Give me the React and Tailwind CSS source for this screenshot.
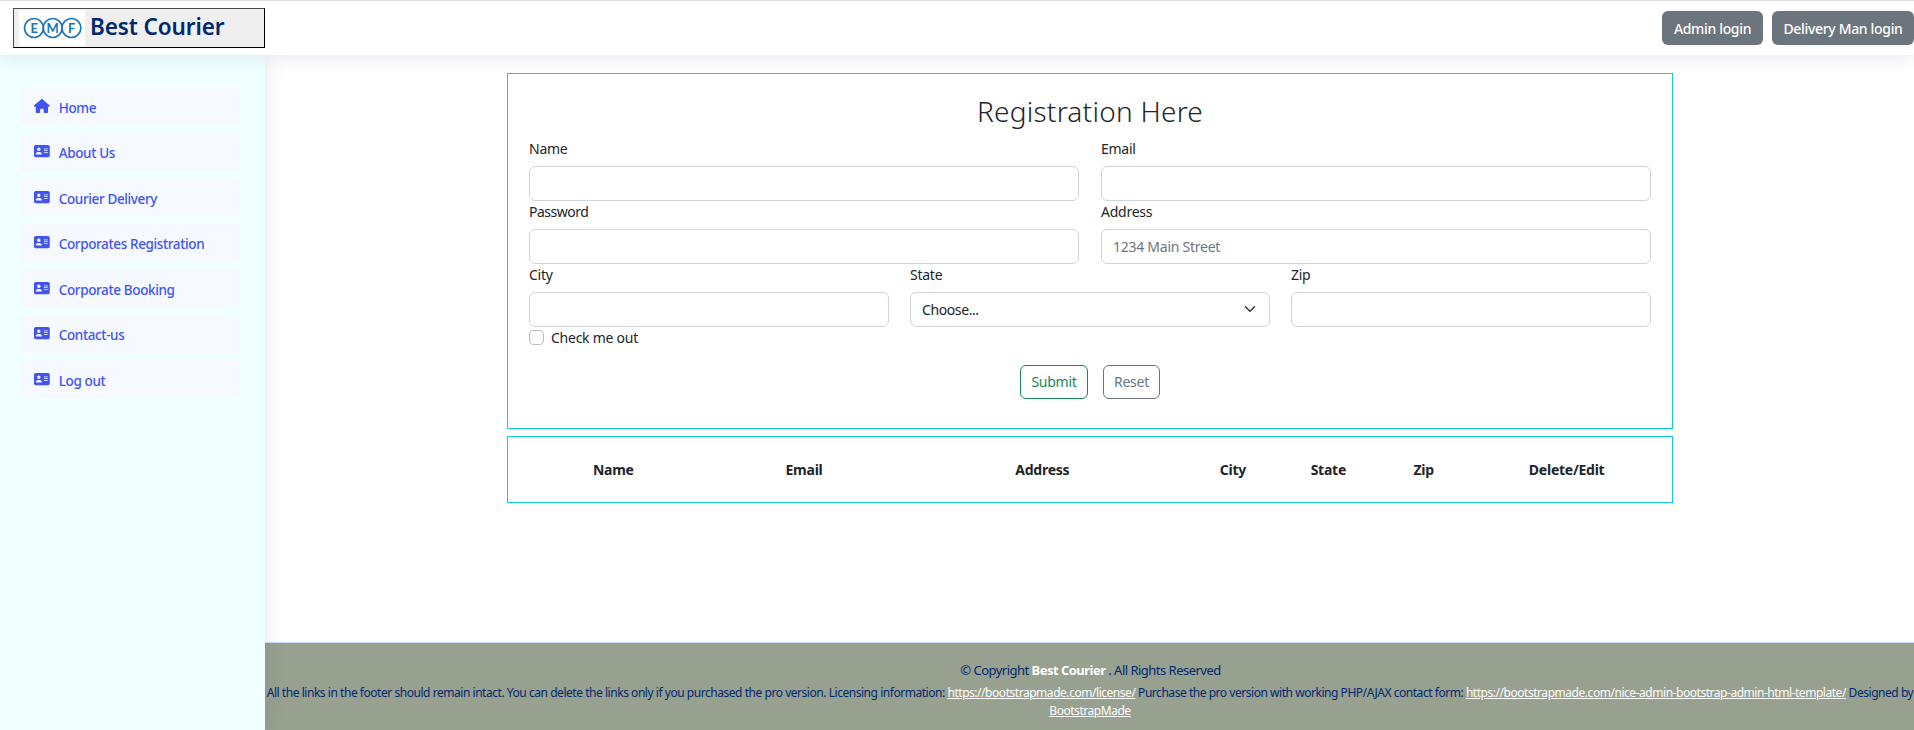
import React from "react";
import { FaAddressCard, FaHouse } from "react-icons/fa6";

const NAV = [
  "Home",
  "About Us",
  "Courier Delivery",
  "Corporates Registration",
  "Corporate Booking",
  "Contact-us",
  "Log out",
];

const COLUMNS = [
  ["Name", "col-span-2"],
  ["Email", "col-span-2"],
  ["Address", "col-span-3"],
  ["City", "col-span-1"],
  ["State", "col-span-1"],
  ["Zip", "col-span-1"],
  ["Delete/Edit", "col-span-2"],
];

function Logo() {
  return (
    <svg className="h-9 w-[66px] bg-white" viewBox="0 0 66 36" fill="none">
      <g stroke="#1b75bb" strokeWidth="1.7">
        <circle cx="15" cy="18" r="9.5" />
        <circle cx="33.7" cy="18" r="9.5" />
        <circle cx="52.4" cy="18" r="9.5" />
      </g>
      <g
        className="font-['Lato',sans-serif] text-[13px] font-bold"
        fill="#1b75bb"
        textAnchor="middle"
      >
        <text x="15" y="22.7">E</text>
        <text x="33.6" y="22.7">M</text>
        <text x="52.6" y="22.7">F</text>
      </g>
    </svg>
  );
}

function Field({ label, placeholder, tight }) {
  return (
    <label className="block">
      <span className={tight ? "block h-[27px] leading-[19px] tracking-[-0.5px]" : "block h-[27px] leading-[19px]"}>
        {label}
      </span>
      <input
        placeholder={placeholder}
        className="block h-[34.5px] w-full rounded-md border border-[#ced4da] px-[11px] tracking-[-0.26px] placeholder:text-[#6c757d]"
      />
    </label>
  );
}

export default function App() {
  return (
    <div className="flex h-[730px] flex-col overflow-hidden bg-white font-['Noto_Sans',sans-serif] text-[14px] tracking-[-0.25px] text-[#212529]">
      <header className="relative z-20 flex h-[55px] shrink-0 items-start justify-between border-t border-[#e0e0dc] bg-white shadow-[0_2px_20px_rgba(1,41,112,0.1)]">
        <button className="ml-[13px] mt-[7px] flex h-10 w-[252px] items-center border border-t-[#4a4a4a] border-l-[#4a4a4a] border-r-black border-b-black bg-[#efefef] pl-[5px]">
          <Logo />
          <span className="ml-[5px] pb-[3px] text-[22.5px] leading-7 font-semibold tracking-[-0.1px] text-[#012970]">
            Best Courier
          </span>
        </button>
        <div className="mt-2.5 flex gap-[9px] text-[14px] font-medium tracking-[-0.33px] text-white">
          <button className="h-[34px] w-[101px] rounded-md bg-[#6c757d]">Admin login</button>
          <button className="h-[34px] w-[142px] rounded-md bg-[#6c757d] whitespace-nowrap">
            Delivery Man login
          </button>
        </div>
      </header>

      <div className="flex min-h-0 flex-1">
        <aside className="relative z-10 w-[265px] shrink-0 bg-[#f0ffff] px-5 pt-8 shadow-[0_0_20px_rgba(1,41,112,0.1)]">
          <nav className="flex flex-col gap-[7.5px]">
            {NAV.map((name, i) => (
              <a
                key={name}
                className="flex h-[38px] w-[220px] items-start rounded bg-[#f6f9ff] pl-[14px] text-[13.5px] font-medium tracking-[-0.37px] text-[#4154f1]"
              >
                {i === 0 ? (
                  <FaHouse className="mt-[11.5px] h-[14px] w-[15.75px]" />
                ) : (
                  <FaAddressCard className="mt-[11.5px] h-[14px] w-[15.75px]" />
                )}
                <span className="ml-[9px] mt-[10.5px] leading-5">{name}</span>
              </a>
            ))}
          </nav>
        </aside>

        <div className="flex min-w-0 flex-1 flex-col">
          <main className="flex-1 pt-[18px] pl-[242px]">
            <form className="h-[356px] w-[1166px] border border-[#0dcaf0] px-[21px] pt-[20px]">
              <h3 className="h-[45px] text-center text-[28px] leading-[34px] font-[340] tracking-[0.25px]">
                Registration Here
              </h3>
              <div className="grid grid-cols-2 gap-x-[22px] gap-y-[1.5px]">
                <Field label="Name" />
                <Field label="Email" />
                <Field label="Password" tight />
                <Field label="Address" placeholder="1234 Main Street" />
              </div>
              <div className="mt-[1.5px] grid grid-cols-3 gap-x-[21px]">
                <Field label="City" />
                <div>
                  <span className="block h-[27px] leading-[19px]">State</span>
                  <div className="flex h-[34.5px] items-center justify-between rounded-md border border-[#ced4da] pr-[13px] pl-[11px]">
                    <span className="pt-px tracking-[-0.4px]">Choose...</span>
                    <svg className="size-3" viewBox="0 0 16 16" fill="none" stroke="#343a40" strokeWidth="2" strokeLinecap="round" strokeLinejoin="round">
                      <path d="m2 5 6 6 6-6" />
                    </svg>
                  </div>
                </div>
                <Field label="Zip" />
              </div>
              <label className="flex h-[21px] items-center">
                <span className="mt-px size-[15px] rounded border border-[#bfbfbf] bg-white" />
                <span className="ml-[7px]">Check me out</span>
              </label>
              <div className="mt-[17px] flex justify-center gap-[15px]">
                <button type="button" className="h-[34px] w-[68px] rounded-md border border-[#198754] text-[#198754]">
                  Submit
                </button>
                <button type="button" className="h-[34px] w-[57px] rounded-md border border-[#6c757d] text-[#6c757d]">
                  Reset
                </button>
              </div>
            </form>

            <section className="mt-[7px] flex h-[67px] w-[1166px] items-center border border-[#0dcaf0] px-2.5">
              <div className="grid w-full grid-cols-12 text-center font-bold">
                {COLUMNS.map(([name, span]) => (
                  <div key={name} className={span}>{name}</div>
                ))}
              </div>
            </section>
          </main>

          <footer className="h-[88px] shrink-0 border-t border-[#cddfff] bg-[#98a08f] pt-[17px] text-center whitespace-nowrap text-[#012970]">
            <div className="pl-[2px] text-[13px] leading-5 tracking-[-0.52px]">
              © Copyright <strong className="font-bold text-white">Best Courier</strong> . All Rights Reserved
            </div>
            <div className="mt-[4px] pl-px text-[12px] leading-[18px] tracking-[-0.46px]">
              All the links in the footer should remain intact. You can delete the links only if you purchased the pro
              version. Licensing information:{" "}
              <a className="text-white underline">https://bootstrapmade.com/license/</a> Purchase the pro version with
              working PHP/AJAX contact form:{" "}
              <a className="text-white underline">
                https://bootstrapmade.com/nice-admin-bootstrap-admin-html-template/
              </a>{" "}
              Designed by
              <br />
              <a className="text-white underline">BootstrapMade</a>
            </div>
          </footer>
        </div>
      </div>
    </div>
  );
}
